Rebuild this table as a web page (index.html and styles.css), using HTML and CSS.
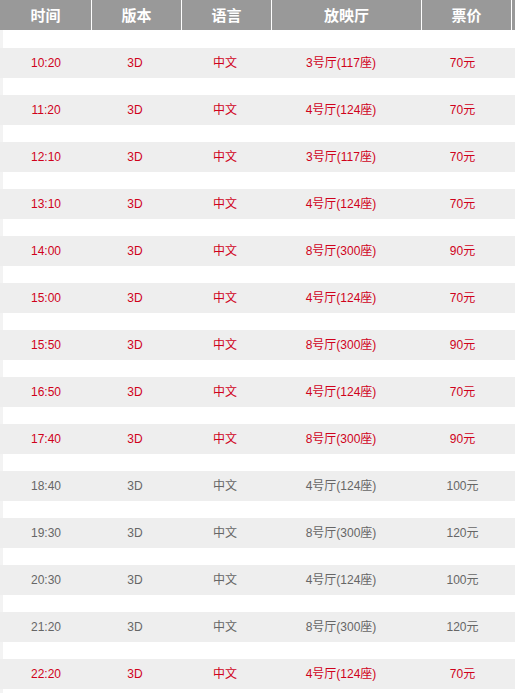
FILE: index.html
```html
<!DOCTYPE html>
<html lang="zh">
<head>
<meta charset="utf-8">
<title>排片表</title>
<link rel="stylesheet" href="styles.css">
</head>
<body>
<div class="schedule">
  <div class="head">
    <div class="hcell">时间</div>
    <div class="hcell">版本</div>
    <div class="hcell">语言</div>
    <div class="hcell">放映厅</div>
    <div class="hcell">票价</div>
    <div class="hcell"></div>
  </div>
  <div class="list">
    <div class="row hot"><span>10:20</span><span>3D</span><span>中文</span><span>3号厅(117座)</span><span>70元</span></div>
    <div class="row hot"><span>11:20</span><span>3D</span><span>中文</span><span>4号厅(124座)</span><span>70元</span></div>
    <div class="row hot"><span>12:10</span><span>3D</span><span>中文</span><span>3号厅(117座)</span><span>70元</span></div>
    <div class="row hot"><span>13:10</span><span>3D</span><span>中文</span><span>4号厅(124座)</span><span>70元</span></div>
    <div class="row hot"><span>14:00</span><span>3D</span><span>中文</span><span>8号厅(300座)</span><span>90元</span></div>
    <div class="row hot"><span>15:00</span><span>3D</span><span>中文</span><span>4号厅(124座)</span><span>70元</span></div>
    <div class="row hot"><span>15:50</span><span>3D</span><span>中文</span><span>8号厅(300座)</span><span>90元</span></div>
    <div class="row hot"><span>16:50</span><span>3D</span><span>中文</span><span>4号厅(124座)</span><span>70元</span></div>
    <div class="row hot"><span>17:40</span><span>3D</span><span>中文</span><span>8号厅(300座)</span><span>90元</span></div>
    <div class="row"><span>18:40</span><span>3D</span><span>中文</span><span>4号厅(124座)</span><span>100元</span></div>
    <div class="row"><span>19:30</span><span>3D</span><span>中文</span><span>8号厅(300座)</span><span>120元</span></div>
    <div class="row"><span>20:30</span><span>3D</span><span>中文</span><span>4号厅(124座)</span><span>100元</span></div>
    <div class="row"><span>21:20</span><span>3D</span><span>中文</span><span>8号厅(300座)</span><span>120元</span></div>
    <div class="row hot"><span>22:20</span><span>3D</span><span>中文</span><span>4号厅(124座)</span><span>70元</span></div>
  </div>
</div>
</body>
</html>
```

FILE: styles.css
```css
html, body {
  margin: 0;
  padding: 0;
  background: #fff;
}
body {
  font-family: "Liberation Sans", Arial, "Noto Sans CJK SC", sans-serif;
  overflow: hidden;
}
.schedule {
  width: 515px;
}
.head {
  display: grid;
  grid-template-columns: 91px 89px 89px 149px 89px 1fr;
  column-gap: 1px;
  background: #fff;
  height: 30px;
}
.hcell {
  background: #999999;
  color: #fff;
  font-family: "Noto Sans CJK SC", sans-serif;
  font-weight: 700;
  font-size: 15px;
  line-height: 30px;
  text-align: center;
}
.list {
  display: flex;
  flex-direction: column;
  gap: 17px;
  padding-top: 18px;
  padding-bottom: 4px;
  background: linear-gradient(to right, #f3f3f3 3px, #fff 3px);
}
.row {
  display: grid;
  grid-template-columns: 92px 86px 94px 138px 105px;
  height: 30px;
  background: #eeeeee;
  color: #666666;
  font-size: 12px;
  line-height: 30px;
  text-align: center;
}
.row span {
  font-family: "Liberation Sans", Arial, "Noto Sans CJK SC", sans-serif;
}
.row.hot {
  color: #d0021b;
}
```
